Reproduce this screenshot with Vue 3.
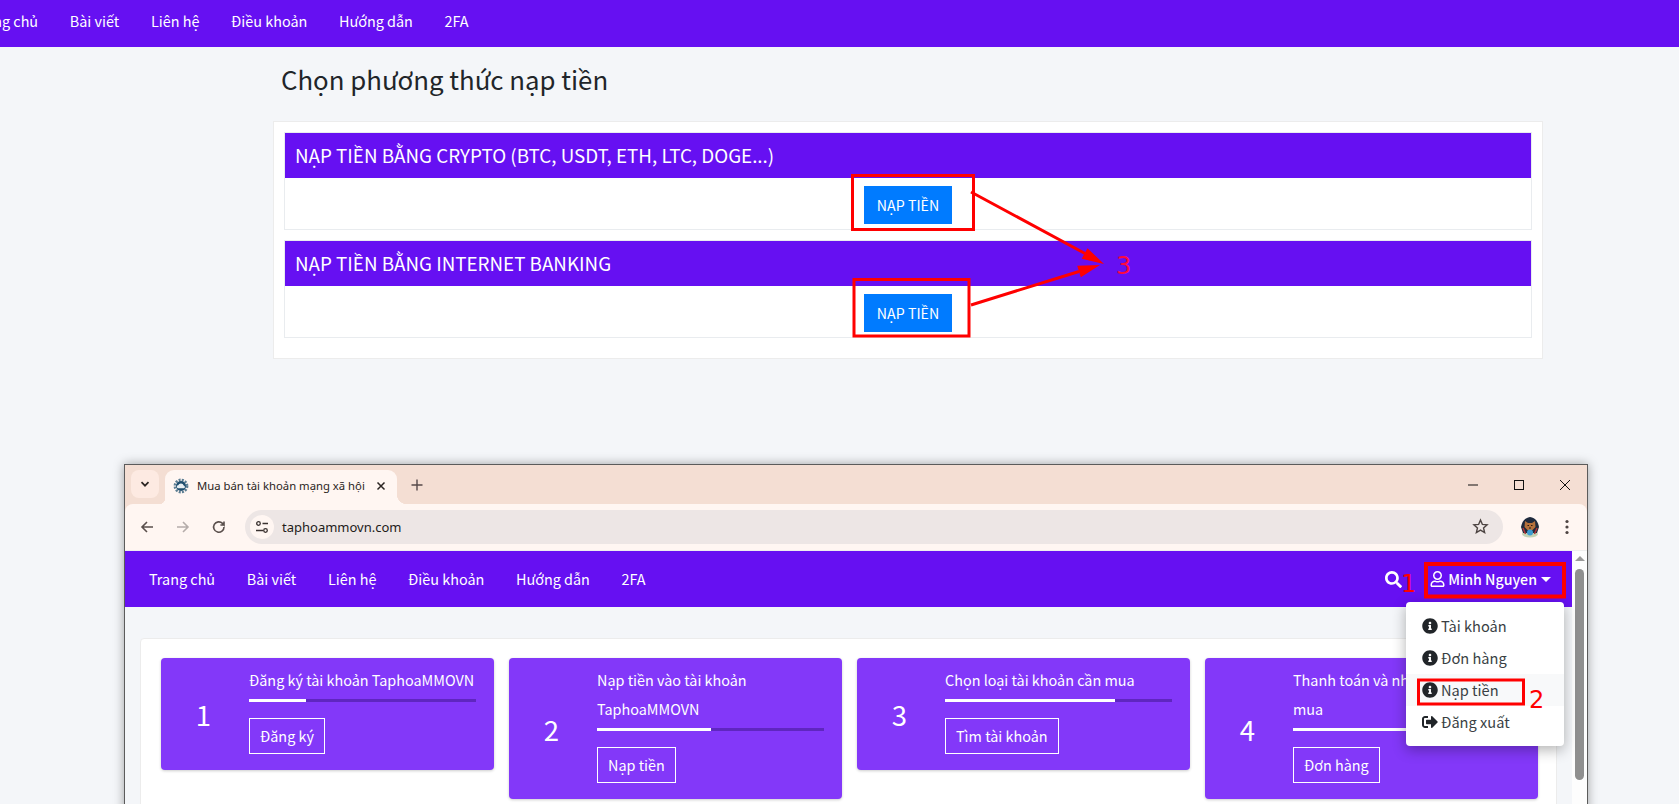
<script setup>
const topLinks = ['Trang chủ', 'Bài viết', 'Liên hệ', 'Điều khoản', 'Hướng dẫn', '2FA']
const methods = [
  'NẠP TIỀN BẰNG CRYPTO (BTC, USDT, ETH, LTC, DOGE...)',
  'NẠP TIỀN BẰNG INTERNET BANKING'
]
const steps = [
  { n: 1, title: 'Đăng ký tài khoản TaphoaMMOVN', pct: 25, btn: 'Đăng ký' },
  { n: 2, title: 'Nạp tiền vào tài khoản TaphoaMMOVN', pct: 50, btn: 'Nạp tiền' },
  { n: 3, title: 'Chọn loại tài khoản cần mua', pct: 75, btn: 'Tìm tài khoản' },
  { n: 4, title: 'Thanh toán và nhận tài khoản đã mua', pct: 100, btn: 'Đơn hàng' }
]
const menu = [
  { label: 'Tài khoản', icon: 'info' },
  { label: 'Đơn hàng', icon: 'info' },
  { label: 'Nạp tiền', icon: 'info', active: true },
  { label: 'Đăng xuất', icon: 'out' }
]
const infoPath = 'M256 8C119.043 8 8 119.083 8 256c0 136.997 111.043 248 248 248s248-111.003 248-248C504 119.083 392.957 8 256 8zm0 110c23.196 0 42 18.804 42 42s-18.804 42-42 42-42-18.804-42-42 18.804-42 42-42zm56 254c0 6.627-5.373 12-12 12h-88c-6.627 0-12-5.373-12-12v-24c0-6.627 5.373-12 12-12h12v-64h-12c-6.627 0-12-5.373-12-12v-24c0-6.627 5.373-12 12-12h64c6.627 0 12 5.373 12 12v100h12c6.627 0 12 5.373 12 12v24z'
const outPath = 'M497 273L329 441c-15 15-41 4.5-41-17v-96H152c-13.3 0-24-10.7-24-24v-96c0-13.3 10.7-24 24-24h136V88c0-21.4 25.9-32 41-17l168 168c9.3 9.4 9.3 24.6 0 34zM192 436v-40c0-6.6-5.4-12-12-12H96c-17.7 0-32-14.3-32-32V160c0-17.7 14.3-32 32-32h84c6.6 0 12-5.4 12-12V76c0-6.6-5.4-12-12-12H96c-53 0-96 43-96 96v192c0 53 43 96 96 96h84c6.6 0 12-5.4 12-12z'
</script>

<template>
  <div class="page">
    <header class="topnav">
      <a v-for="l in topLinks" :key="l" class="navlink">{{ l }}</a>
    </header>

    <main class="method">
      <h3 class="method-title">Chọn phương thức nạp tiền</h3>
      <section class="method-card">
        <div v-for="m in methods" :key="m" class="method-box">
          <div class="method-head">{{ m }}</div>
          <div class="method-body"><button class="pay-btn">NẠP TIỀN</button></div>
        </div>
      </section>
    </main>

    <div class="win">
      <div class="tabstrip">
        <span class="tab-search">
          <svg width="12" height="12" viewBox="0 0 12 12"><path d="M2.5 4.2 6 7.7l3.5-3.5" fill="none" stroke="#2b2523" stroke-width="1.7"/></svg>
        </span>
        <div class="tab">
          <svg class="favicon" width="16" height="16" viewBox="0 0 16 16">
            <circle cx="8" cy="8" r="6.1" fill="none" stroke="#5d7e93" stroke-width="2.6" stroke-dasharray="2 1.2"/>
            <circle cx="8" cy="8" r="5" fill="#1f4e6e"/>
            <path d="M4.8 10.2a1.5 1.5 0 0 1 .4-2.9 2.9 2.9 0 0 1 5.5.2 1.4 1.4 0 0 1 .3 2.7z" fill="#e8eef2"/>
          </svg>
          <span class="tab-title">Mua bán tài khoản mạng xã hội</span>
          <svg class="tab-x" width="10" height="10" viewBox="0 0 10 10"><path d="M1.5 1.5l7 7M8.5 1.5l-7 7" stroke="#2b2523" stroke-width="1.5"/></svg>
        </div>
        <svg class="plus" width="12" height="12" viewBox="0 0 12 12"><path d="M6 .5v11M.5 6h11" stroke="#55494a" stroke-width="1.4"/></svg>
        <div class="win-ctrls">
          <svg width="12" height="12" viewBox="0 0 12 12"><path d="M1 6h10" stroke="#111" stroke-width="1"/></svg>
          <svg width="12" height="12" viewBox="0 0 12 12"><rect x="1.5" y="1.5" width="9" height="9" fill="none" stroke="#111" stroke-width="1"/></svg>
          <svg width="12" height="12" viewBox="0 0 12 12"><path d="M1 1l10 10M11 1 1 11" stroke="#111" stroke-width="1"/></svg>
        </div>
      </div>

      <div class="toolbar">
        <svg class="tool" width="16" height="16" viewBox="0 0 16 16"><path d="M14 8H3M8 3 3 8l5 5" fill="none" stroke="#5a4f4c" stroke-width="1.6"/></svg>
        <svg class="tool" width="16" height="16" viewBox="0 0 16 16"><path d="M2 8h11M8 3l5 5-5 5" fill="none" stroke="#b5acaa" stroke-width="1.6"/></svg>
        <svg class="tool" width="16" height="16" viewBox="0 0 16 16"><path d="M13 8a5.2 5.2 0 1 1-1.5-3.6L13 6V2.4M13 6H9.4" fill="none" stroke="#5a4f4c" stroke-width="1.6"/></svg>
        <div class="omnibox">
          <span class="chip">
            <svg width="16" height="16" viewBox="0 0 16 16" fill="none" stroke="#3a3230" stroke-width="1.3">
              <circle cx="4.5" cy="4.5" r="1.8"/><path d="M8.5 4.5H14M2 11.5h7"/><circle cx="11.5" cy="11.5" r="1.8"/>
            </svg>
          </span>
          <span class="url">taphoammovn.com</span>
          <svg class="star" width="17" height="17" viewBox="0 0 24 24"><path d="M12 3l2.7 6.1 6.6.6-5 4.4 1.5 6.5L12 17.2l-5.8 3.4 1.5-6.5-5-4.4 6.6-.6z" fill="none" stroke="#4d4442" stroke-width="2"/></svg>
        </div>
        <svg class="avatar" width="20" height="22" viewBox="0 0 20 22">
          <ellipse cx="10" cy="18" rx="8" ry="3.5" fill="#c3d3b5"/>
          <path d="M1 11c1-5 3-9 9-10 6 1 8 5 9 10l-2 6H3z" fill="#1f2a3d"/>
          <path d="M5 5l3 2h4l3-2 .5 6-3 3h-5l-3-3z" fill="#b4713c"/>
          <path d="M7.5 9.5h1.5M11 9.5h1.5M9 12h2" stroke="#2a1a12" stroke-width="1"/>
          <path d="M3 12l2.5 6M17 12l-2.5 6" stroke="#b0343a" stroke-width="1.5"/>
          <circle cx="10" cy="16.5" r="3" fill="#3d9bd0"/>
        </svg>
        <svg class="dots" width="4" height="16" viewBox="0 0 4 16" fill="#4d4442"><circle cx="2" cy="2.5" r="1.6"/><circle cx="2" cy="8" r="1.6"/><circle cx="2" cy="13.5" r="1.6"/></svg>
      </div>

      <div class="viewport">
        <div class="site">
          <nav class="sitenav">
            <a v-for="l in topLinks" :key="l" class="navlink">{{ l }}</a>
            <svg class="search" width="17" height="17" viewBox="0 0 512 512"><path fill="#fff" d="M505 442.7L405.3 343c-4.5-4.5-10.6-7-17-7H372c27.6-35.3 44-79.7 44-128C416 93.1 322.9 0 208 0S0 93.1 0 208s93.1 208 208 208c48.3 0 92.7-16.4 128-44v16.3c0 6.4 2.5 12.5 7 17l99.7 99.7c9.4 9.4 24.6 9.4 33.9 0l28.3-28.3c9.4-9.4 9.4-24.6.1-34zM208 336c-70.7 0-128-57.2-128-128 0-70.7 57.2-128 128-128 70.7 0 128 57.2 128 128 0 70.7-57.2 128-128 128z"/></svg>
            <div class="user">
              <svg width="15" height="16" viewBox="0 0 448 512"><path fill="#fff" d="M313.6 304c-28.7 0-42.5 16-89.6 16-47.1 0-60.8-16-89.6-16C60.2 304 0 364.2 0 438.4V464c0 26.5 21.5 48 48 48h352c26.5 0 48-21.5 48-48v-25.6c0-74.2-60.2-134.4-134.4-134.4zM400 464H48v-25.6c0-47.6 38.8-86.4 86.4-86.4 14.6 0 38.3 16 89.6 16 51.7 0 74.9-16 89.6-16 47.6 0 86.4 38.8 86.4 86.4V464zM224 288c79.5 0 144-64.5 144-144S303.5 0 224 0 80 64.5 80 144s64.5 144 144 144zm0-240c52.9 0 96 43.1 96 96s-43.1 96-96 96-96-43.1-96-96 43.1-96 96-96z"/></svg>
              <span class="username">Minh Nguyen</span>
              <span class="caret"></span>
              <ul class="dropdown">
                <li v-for="item in menu" :key="item.label" class="dd-item" :class="{ active: item.active }">
                  <svg width="16" height="16" viewBox="0 0 512 512"><path fill="#212529" :d="item.icon === 'info' ? infoPath : outPath"/></svg>
                  <span>{{ item.label }}</span>
                </li>
              </ul>
            </div>
          </nav>
          <div class="site-body">
            <div class="steps-card">
              <article v-for="s in steps" :key="s.n" class="step">
                <div class="step-num">{{ s.n }}</div>
                <div class="step-main">
                  <div class="step-title">{{ s.title }}</div>
                  <div class="bar"><div class="bar-fill" :style="{ width: s.pct + '%' }"></div></div>
                  <a class="step-btn">{{ s.btn }}</a>
                </div>
              </article>
            </div>
          </div>
        </div>
        <div class="scrollbar">
          <span class="sb-up"></span>
          <span class="sb-thumb"></span>
        </div>
      </div>
    </div>

    <svg class="marks" width="1679" height="804" viewBox="0 0 1679 804">
      <g fill="none" stroke="#f00" stroke-width="3">
        <rect x="852.5" y="175.5" width="121" height="54"/>
        <rect x="854" y="279.5" width="115" height="56.5"/>
        <rect x="1418.5" y="680" width="105" height="24"/>
      </g>
      <rect x="1426" y="564" width="138" height="32.5" fill="none" stroke="#f00" stroke-width="4"/>
      <path d="M971 192 1085 253.5M971 305l108-33.5" fill="none" stroke="#f00" stroke-width="3"/>
      <path d="M1104 264l-22.3-5.2 5.8-10.6zM1100 265l-19.2 12.2-3.6-11.4z" fill="#f00"/>
      <text x="1116" y="274" class="mark-num thin">3</text>
      <text x="1401" y="592" class="mark-num">1</text>
      <text x="1529" y="708" class="mark-num">2</text>
    </svg>
  </div>
</template>

<style>
html, body { margin: 0; overflow: hidden; background: #f4f6f9; }
</style>

<style scoped>
.page {
  position: relative;
  width: 1679px;
  height: 804px;
  overflow: hidden;
  background: #f4f6f9;
  color: #212529;
  font-family: "Noto Sans CJK SC", "Noto Sans", sans-serif;
  font-size: 14.4px;
}
.topnav {
  height: 47px;
  box-sizing: border-box;
  display: flex;
  align-items: center;
  gap: 31.7px;
  padding: 0 0 6px;
  margin-left: -28px;
  background: #6610f2;
}
.navlink {
  color: #fff;
  font-size: 14.4px;
  line-height: 24px;
  white-space: nowrap;
}
.method {
  width: 1270px;
  margin-left: 273px;
}
.method-title {
  margin: 0;
  padding: 12px 8px 0;
  height: 74px;
  box-sizing: border-box;
  font-size: 25.8px;
  font-weight: 400;
  line-height: 40px;
  color: #212529;
}
.method-card {
  box-sizing: border-box;
  height: 238px;
  padding: 10px 10px 0;
  background: #fff;
  border: 1px solid #ececec;
}
.method-box {
  height: 98px;
  box-sizing: border-box;
  border: 1px solid #e9ecef;
}
.method-box + .method-box { margin-top: 10px; }
.method-head {
  height: 45px;
  box-sizing: border-box;
  padding: 0 10px;
  background: #6610f2;
  color: #fff;
  font-size: 18.8px;
  line-height: 43px;
}
.method-body {
  display: flex;
  justify-content: center;
  padding-top: 8px;
}
.pay-btn {
  width: 88px;
  height: 38px;
  padding: 0;
  border: 0;
  background: #007bff;
  color: #fff;
  font: inherit;
  font-size: 14.2px;
  line-height: 38px;
}
.win {
  box-sizing: border-box;
  width: 1464px;
  height: 420px;
  margin: 105px 0 0 124px;
  border: 1px solid #5b5b5b;
  box-shadow: 0 0 10px rgba(0, 0, 0, .35);
  background: #f4ded3;
  font-family: "Open Sans", "Noto Sans", sans-serif;
}
.tabstrip {
  height: 39px;
  display: flex;
  align-items: flex-start;
  padding: 5px 0 0 6px;
  box-sizing: border-box;
}
.tab-search {
  width: 28px;
  height: 28px;
  border-radius: 8px;
  background: #fdeae2;
  display: flex;
  align-items: center;
  justify-content: center;
}
.tab {
  position: relative;
  width: 232px;
  height: 34px;
  margin-left: 6px;
  box-sizing: border-box;
  display: flex;
  align-items: center;
  padding: 0 11px 3px 8px;
  background: #fff6f2;
  border-radius: 9px 9px 0 0;
}
.tab::after {
  content: "";
  position: absolute;
  right: -10px;
  bottom: 0;
  width: 10px;
  height: 10px;
  background: radial-gradient(circle at 100% 0, #f4ded3 10px, #fff6f2 10.5px);
}
.tab::before {
  content: "";
  position: absolute;
  left: -6px;
  bottom: 0;
  width: 6px;
  height: 6px;
  background: radial-gradient(circle at 0 0, #f4ded3 6px, #fff6f2 6.5px);
}
.tab-title {
  margin-left: 8px;
  flex: 1;
  font-size: 11.3px;
  white-space: nowrap;
  color: #2b2523;
  font-family: "Noto Sans", sans-serif;
}
.tab-x { flex: none; }
.plus { margin: 9px 0 0 14px; }
.win-ctrls {
  margin-left: auto;
  margin-top: 9px;
  padding-right: 16px;
  display: flex;
  gap: 34px;
}
.toolbar {
  height: 47px;
  box-sizing: border-box;
  display: flex;
  align-items: center;
  padding: 0 0 1px 14px;
  background: #fff6f2;
  border-radius: 8px 8px 0 0;
  border-bottom: 1px solid #eee;
}
.tool { margin-right: 20px; flex: none; }
.omnibox {
  width: 1258px;
  height: 34px;
  margin-left: -2px;
  box-sizing: border-box;
  display: flex;
  align-items: center;
  padding: 0 14px 0 5px;
  border-radius: 17px;
  background: #ede6e5;
}
.chip {
  width: 24px;
  height: 24px;
  border-radius: 50%;
  background: #fff6f2;
  display: flex;
  align-items: center;
  justify-content: center;
}
.url {
  margin-left: 8px;
  font-size: 13px;
  color: #231c1a;
  font-family: "Noto Sans", sans-serif;
}
.star { margin-left: auto; }
.avatar { margin-left: 17px; flex: none; }
.dots { margin-left: 25px; flex: none; }
.viewport {
  height: 340px;
  display: flex;
  background: #f4f6f9;
  font-family: "Noto Sans CJK SC", "Noto Sans", sans-serif;
}
.site { flex: 1; min-width: 0; }
.sitenav {
  height: 56px;
  display: flex;
  align-items: center;
  gap: 31.7px;
  padding: 0 9px 0 24px;
  background: #6610f2;
}
.search { margin-left: auto; margin-right: -3px; flex: none; }
.user {
  position: relative;
  display: flex;
  align-items: center;
  padding-right: 12px;
  color: #fff;
}
.username { margin: 0 4px 0 3px; font-size: 14.2px; font-weight: 500; line-height: 24px; }
.caret {
  width: 0;
  height: 0;
  border: 5px solid transparent;
  border-top-color: #fff;
  border-bottom: 0;
}
.dropdown {
  position: absolute;
  top: 35px;
  right: -1px;
  width: 158px;
  box-sizing: border-box;
  margin: 0;
  padding: 8px 0;
  list-style: none;
  background: #fff;
  border-radius: 4px;
  box-shadow: 0 4px 14px rgba(0, 0, 0, .3);
  color: #3a3f44;
  z-index: 2;
}
.dd-item {
  height: 32px;
  box-sizing: border-box;
  display: flex;
  align-items: center;
  gap: 3px;
  padding-left: 16px;
  font-size: 14.6px;
  line-height: 24px;
}
.dd-item.active { background: #f8f9fa; }
.site-body { padding: 31px 15px 0; }
.steps-card {
  box-sizing: border-box;
  height: 260px;
  padding: 19px 19px 0 20px;
  display: grid;
  grid-template-columns: repeat(4, 333px);
  gap: 15px;
  align-items: start;
  background: #fff;
  border: 1px solid #ececec;
  border-radius: 4px 4px 0 0;
}
.step {
  display: flex;
  background: #8338f9;
  border-radius: 4px;
  color: #fff;
  box-shadow: 0 1px 3px rgba(0, 0, 0, .2);
}
.step-num {
  width: 85px;
  flex: none;
  align-self: center;
  text-align: center;
  font-size: 27.5px;
  line-height: 36px;
}
.step-main {
  flex: 1;
  min-width: 0;
  padding: 7px 18px 16px 3px;
}
.step-title {
  font-size: 14.4px;
  line-height: 29px;
}
.bar {
  height: 3px;
  margin: 5px 0 16px;
  background: #5f26c0;
}
.bar-fill { height: 100%; background: #fff; }
.step-btn {
  display: inline-block;
  box-sizing: border-box;
  height: 36px;
  padding: 0 10px;
  border: 1px solid #fff;
  font-size: 14.4px;
  line-height: 34px;
}
.scrollbar {
  width: 15px;
  flex: none;
  background: #fdfdfd;
  display: flex;
  flex-direction: column;
  align-items: center;
}
.sb-up {
  width: 0;
  height: 0;
  margin-top: 5px;
  border: 5px solid transparent;
  border-top: 0;
  border-bottom-color: #9a9a9a;
}
.sb-thumb {
  width: 9px;
  height: 211px;
  margin-top: 8px;
  border-radius: 5px;
  background: #8f8f8f;
}
.marks {
  position: absolute;
  left: 0;
  top: 0;
  z-index: 3;
  pointer-events: none;
}
.mark-num {
  font-family: "DejaVu Sans", sans-serif;
  font-size: 24px;
  fill: #f00;
}
.mark-num.thin { fill: #ff0a3c; }
</style>
